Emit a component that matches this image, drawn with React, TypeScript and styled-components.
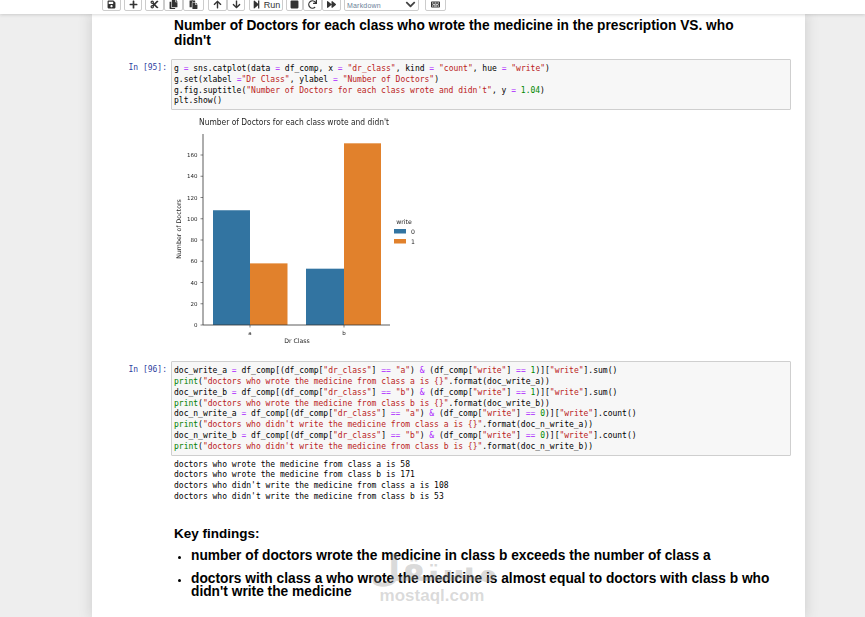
import React from "react";
import styled, { createGlobalStyle } from "styled-components";
import {
  FaSave,
  FaPlus,
  FaCut,
  FaCopy,
  FaPaste,
  FaArrowUp,
  FaArrowDown,
  FaStepForward,
  FaStop,
  FaRedo,
  FaForward,
  FaKeyboard,
  FaChevronDown,
} from "react-icons/fa";

const GlobalStyle = createGlobalStyle`
  html, body {
    margin: 0;
    height: 617px;
    overflow: hidden;
    background: #eeeeee;
    font-family: "Liberation Sans", Arial, sans-serif;
  }
`;

const Shell = styled.div`
  position: relative;
  width: 865px;
  height: 617px;
  overflow: hidden;
`;

const Toolbar = styled.div`
  position: relative;
  z-index: 2;
  height: 14px;
  box-sizing: border-box;
  padding: 0 0 3px 102px;
  display: flex;
  align-items: flex-end;
  background: #fff;
  box-shadow: 0 1px 3px rgba(87, 87, 87, 0.22);
`;

const Group = styled.div<{ $gap?: number }>`
  display: flex;
  height: 20px;
  margin-right: ${(p) => p.$gap ?? 3}px;
`;

const ToolButton = styled.div<{ $w?: number }>`
  width: ${(p) => p.$w ?? 19}px;
  height: 20px;
  box-sizing: border-box;
  padding-top: 8px;
  display: flex;
  justify-content: center;
  align-items: flex-start;
  gap: 3px;
  background: #fff;
  border: 1px solid #ccc;
  border-radius: 2px;
  color: #333;
  font-size: 9px;
  line-height: 10px;
  svg {
    font-size: 9px;
    flex: none;
  }
`;

const Select = styled.div`
  width: 75px;
  height: 20px;
  box-sizing: border-box;
  margin-right: 6px;
  padding: 9px 2px 0 2px;
  display: flex;
  justify-content: space-between;
  background: #fff;
  border: 1px solid #ccc;
  border-radius: 2px;
  color: #6b7f99;
  font-size: 7px;
  line-height: 9px;
  letter-spacing: 0.2px;
  svg {
    font-size: 11px;
    color: #444;
    margin-top: -2px;
  }
`;

const Page = styled.div`
  width: 713px;
  height: 603px;
  margin-left: 92px;
  padding-top: 4px;
  box-sizing: border-box;
  background: #fff;
  box-shadow: 0 0 12px 1px rgba(87, 87, 87, 0.2);
`;

const Title = styled.h2`
  margin: 0 65px 11px 82px;
  font-size: 13.72px;
  line-height: 15px;
  font-weight: bold;
  color: #000;
`;

const Cell = styled.div`
  display: flex;
  gap: 4px;
`;

const Prompt = styled.div`
  width: 75px;
  flex: none;
  padding-top: 4px;
  text-align: right;
  color: #303f9f;
  font-family: "DejaVu Sans Mono", monospace;
  font-size: 8px;
  line-height: 10.8px;
`;

const CodeBox = styled.pre`
  width: 620px;
  box-sizing: border-box;
  margin: 0;
  padding: 4px 2px 2px 2px;
  background: #f7f7f7;
  border: 1px solid #cfcfcf;
  border-radius: 1px;
  color: #000;
  font-family: "DejaVu Sans Mono", monospace;
  font-size: 8px;
  line-height: 10.8px;
`;

const Op = styled.span`
  color: #aa22ff;
`;
const Str = styled.span`
  color: #ba2121;
`;
const Num = styled.span`
  color: #008800;
`;
const Builtin = styled.span`
  color: #008000;
`;

const ChartWrap = styled.div`
  margin: 2px 0 11px 79px;
  height: 238px;
`;

const Chart = styled.svg`
  display: block;
  filter: blur(0.25px);
  font-family: "DejaVu Sans", sans-serif;
`;

const Output = styled.pre`
  margin: 4px 0 0 82px;
  color: #000;
  font-family: "DejaVu Sans Mono", monospace;
  font-size: 8px;
  line-height: 10.8px;
`;

const Findings = styled.h3`
  margin: 23px 0 7.5px 82px;
  font-size: 13.5px;
  line-height: 16px;
  font-weight: bold;
  color: #000;
`;

const List = styled.ul`
  margin: 0 0 0 82px;
  padding: 0 0 0 17px;
  width: 590px;
  font-size: 13.75px;
  line-height: 13px;
  font-weight: bold;
  color: #000;
`;

const Item = styled.li`
  margin-bottom: 9.5px;
  &::marker {
    font-size: 11px;
  }
`;

const Watermark = styled.div`
  position: absolute;
  left: 370px;
  top: 553px;
  width: 124px;
  text-align: center;
  color: rgba(150, 150, 150, 0.35);
  font-weight: bold;
  pointer-events: none;
`;

const WatermarkArabic = styled.div`
  font-family: "DejaVu Sans", sans-serif;
  font-size: 35px;
  line-height: 33px;
`;

const WatermarkLatin = styled.div`
  font-family: "Liberation Sans", sans-serif;
  font-size: 17px;
  line-height: 20px;
`;

const S = (t: string) => <Str>{t}</Str>;
const Eq = () => <Op>=</Op>;

const maskLine = (name: string, cls: string, val: string, method: string) => (
  <>
    {name} <Eq /> df_comp[(df_comp[{S('"dr_class"')}] <Op>==</Op> {S(`"${cls}"`)}) <Op>&amp;</Op> (df_comp[
    {S('"write"')}] <Op>==</Op> <Num>{val}</Num>)][{S('"write"')}].{method}()
    {"\n"}
  </>
);

const printLine = (text: string, arg: string, last?: boolean) => (
  <>
    <Builtin>print</Builtin>({S(`"${text} {}"`)}.format({arg}))
    {last ? "" : "\n"}
  </>
);

const yTicks = [0, 20, 40, 60, 80, 100, 120, 140, 160];
const y0 = 213; // baseline inside the chart svg
const unit = 1.0625;
const left = 32;

const bars = [
  { x: 42, w: 37, v: 108, c: "#3274a1" },
  { x: 79, w: 37.5, v: 58, c: "#e1812c" },
  { x: 135, w: 38, v: 53, c: "#3274a1" },
  { x: 173, w: 37, v: 171, c: "#e1812c" },
];

const CatPlot = () => (
  <Chart width="270" height="238" viewBox="0 0 270 238">
    <text x="28" y="12.5" fontSize="8" fill="#262626" textLength="190" lengthAdjust="spacingAndGlyphs">
      Number of Doctors for each class wrote and didn't
    </text>
    {bars.map((b) => (
      <rect key={b.x} x={b.x} y={y0 - b.v * unit} width={b.w} height={b.v * unit} fill={b.c} />
    ))}
    <path d={`M${left} 22V${y0}H219`} fill="none" stroke="#333" strokeWidth="0.8" />
    {yTicks.map((t) => (
      <g key={t}>
        <line x1={left - 2.5} x2={left} y1={y0 - t * unit} y2={y0 - t * unit} stroke="#333" strokeWidth="0.6" />
        <text x={left - 5.5} y={y0 - t * unit + 2} fontSize="5.5" fill="#262626" textAnchor="end">
          {t}
        </text>
      </g>
    ))}
    <line x1="79" x2="79" y1={y0} y2={y0 + 2.5} stroke="#333" strokeWidth="0.6" />
    <line x1="173" x2="173" y1={y0} y2={y0 + 2.5} stroke="#333" strokeWidth="0.6" />
    <text x="79" y={y0 + 9.5} fontSize="5.5" fill="#262626" textAnchor="middle">
      a
    </text>
    <text x="173" y={y0 + 9.5} fontSize="5.5" fill="#262626" textAnchor="middle">
      b
    </text>
    <text x="126" y={y0 + 18} fontSize="6.2" fill="#262626" textAnchor="middle">
      Dr Class
    </text>
    <text
      transform={`translate(9.5 ${y0 - 96}) rotate(-90)`}
      fontSize="6.3"
      fill="#262626"
      textAnchor="middle"
    >
      Number of Doctors
    </text>
    <text x="233" y="111.5" fontSize="6.2" fill="#262626" textAnchor="middle">
      write
    </text>
    <rect x="223" y="117" width="12" height="4.5" fill="#3274a1" />
    <rect x="223" y="127" width="12" height="4.5" fill="#e1812c" />
    <text x="240" y="122" fontSize="6.2" fill="#262626">
      0
    </text>
    <text x="240" y="132" fontSize="6.2" fill="#262626">
      1
    </text>
  </Chart>
);

export default function App() {
  return (
    <Shell>
      <GlobalStyle />
      <Toolbar>
        <Group>
          <ToolButton>
            <FaSave />
          </ToolButton>
        </Group>
        <Group>
          <ToolButton $w={18}>
            <FaPlus />
          </ToolButton>
        </Group>
        <Group $gap={4}>
          <ToolButton>
            <FaCut />
          </ToolButton>
          <ToolButton>
            <FaCopy />
          </ToolButton>
          <ToolButton $w={21}>
            <FaPaste />
          </ToolButton>
        </Group>
        <Group $gap={4}>
          <ToolButton>
            <FaArrowUp />
          </ToolButton>
          <ToolButton $w={18}>
            <FaArrowDown />
          </ToolButton>
        </Group>
        <Group>
          <ToolButton $w={34}>
            <FaStepForward />
            Run
          </ToolButton>
        </Group>
        <Group>
          <ToolButton $w={17}>
            <FaStop />
          </ToolButton>
          <ToolButton>
            <FaRedo />
          </ToolButton>
          <ToolButton>
            <FaForward />
          </ToolButton>
        </Group>
        <Select>
          Markdown
          <FaChevronDown />
        </Select>
        <ToolButton $w={21}>
          <FaKeyboard />
        </ToolButton>
      </Toolbar>

      <Page>
        <Title>Number of Doctors for each class who wrote the medicine in the prescription VS. who didn't</Title>

        <Cell>
          <Prompt>In [95]:</Prompt>
          <CodeBox>
            g <Eq /> sns.catplot(data <Eq /> df_comp, x <Eq /> {S('"dr_class"')}, kind <Eq /> {S('"count"')}, hue{" "}
            <Eq /> {S('"write"')})
            {"\n"}g.set(xlabel <Eq />
            {S('"Dr Class"')}, ylabel <Eq /> {S('"Number of Doctors"')})
            {"\n"}g.fig.suptitle({S('"Number of Doctors for each class wrote and didn\'t"')}, y <Eq /> <Num>1.04</Num>)
            {"\n"}plt.show()
          </CodeBox>
        </Cell>

        <ChartWrap>
          <CatPlot />
        </ChartWrap>

        <Cell>
          <Prompt>In [96]:</Prompt>
          <CodeBox>
            {maskLine("doc_write_a", "a", "1", "sum")}
            {printLine("doctors who wrote the medicine from class a is", "doc_write_a")}
            {maskLine("doc_write_b", "b", "1", "sum")}
            {printLine("doctors who wrote the medicine from class b is", "doc_write_b")}
            {maskLine("doc_n_write_a", "a", "0", "count")}
            {printLine("doctors who didn't write the medicine from class a is", "doc_n_write_a")}
            {maskLine("doc_n_write_b", "b", "0", "count")}
            {printLine("doctors who didn't write the medicine from class b is", "doc_n_write_b", true)}
          </CodeBox>
        </Cell>

        <Output>
          {`doctors who wrote the medicine from class a is 58
doctors who wrote the medicine from class b is 171
doctors who didn't write the medicine from class a is 108
doctors who didn't write the medicine from class b is 53`}
        </Output>

        <Findings>Key findings:</Findings>
        <List>
          <Item>number of doctors wrote the medicine in class b exceeds the number of class a</Item>
          <Item>doctors with class a who wrote the medicine is almost equal to doctors with class b who didn't write the medicine</Item>
        </List>
      </Page>

      <Watermark>
        <WatermarkArabic>مستقل</WatermarkArabic>
        <WatermarkLatin>mostaql.com</WatermarkLatin>
      </Watermark>
    </Shell>
  );
}
